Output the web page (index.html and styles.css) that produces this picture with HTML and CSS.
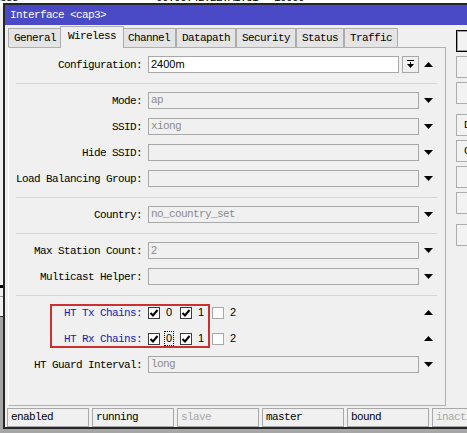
FILE: index.html
```html
<!DOCTYPE html>
<html lang="en">
<head>
  <meta charset="UTF-8" />
  <title>Interface &lt;cap3&gt;</title>
  <link rel="stylesheet" href="styles.css">
</head>
<body>
  <div class="desktop">
    <!-- list window lying behind the dialog -->
    <div class="back-window">
      <div class="back-row">
        <span class="back-name">Wireless</span>
        <span class="back-mac">00:0C:42:2E:A1:31</span>
        <span class="back-rate">10000</span>
      </div>
      <span class="back-mark"></span>
      <span class="back-line"></span>
    </div>

    <div class="window">
      <div class="titlebar">Interface &lt;cap3&gt;</div>

      <div class="win-body">
        <div class="main">
          <div class="tabs">
            <div class="tab">General</div>
            <div class="tab active">Wireless</div>
            <div class="tab">Channel</div>
            <div class="tab">Datapath</div>
            <div class="tab">Security</div>
            <div class="tab">Status</div>
            <div class="tab">Traffic</div>
          </div>

          <div class="panel">
            <div class="row">
              <label class="label">Configuration:</label>
              <div class="combo">
                <div class="input edit">2400m</div>
                <span class="drop-btn">
                  <svg width="8" height="9" viewBox="0 0 8 9">
                    <rect x="0" y="0" width="7" height="1" />
                    <rect x="3" y="2" width="1" height="3" />
                    <polygon points="0,4 7,4 3.5,8" />
                  </svg>
                </span>
              </div>
              <span class="arrow up"></span>
            </div>

            <div class="sep"></div>

            <div class="row">
              <label class="label">Mode:</label>
              <div class="input off">ap</div>
              <span class="arrow down"></span>
            </div>
            <div class="row">
              <label class="label">SSID:</label>
              <div class="input off">xiong</div>
              <span class="arrow down"></span>
            </div>
            <div class="row">
              <label class="label">Hide SSID:</label>
              <div class="input off"></div>
              <span class="arrow down"></span>
            </div>
            <div class="row">
              <label class="label">Load Balancing Group:</label>
              <div class="input off"></div>
              <span class="arrow down"></span>
            </div>

            <div class="sep"></div>

            <div class="row">
              <label class="label">Country:</label>
              <div class="input off">no_country_set</div>
              <span class="arrow down"></span>
            </div>

            <div class="sep"></div>

            <div class="row">
              <label class="label">Max Station Count:</label>
              <div class="input off sans">2</div>
              <span class="arrow down"></span>
            </div>
            <div class="row">
              <label class="label">Multicast Helper:</label>
              <div class="input off"></div>
              <span class="arrow down"></span>
            </div>

            <div class="sep"></div>

            <div class="chains">
              <div class="row">
                <label class="label blue">HT Tx Chains:</label>
                <div class="checks">
                  <span class="cb"><svg width="10" height="10" viewBox="0 0 10 10"><polyline points="1.5,5 4,7.5 8.5,2" /></svg></span><span class="num">0</span>
                  <span class="cb"><svg width="10" height="10" viewBox="0 0 10 10"><polyline points="1.5,5 4,7.5 8.5,2" /></svg></span><span class="num">1</span>
                  <span class="cb off"></span><span class="num">2</span>
                </div>
                <span class="arrow up"></span>
              </div>
              <div class="row">
                <label class="label blue">HT Rx Chains:</label>
                <div class="checks">
                  <span class="cb"><svg width="10" height="10" viewBox="0 0 10 10"><polyline points="1.5,5 4,7.5 8.5,2" /></svg></span><span class="num focus">0</span>
                  <span class="cb"><svg width="10" height="10" viewBox="0 0 10 10"><polyline points="1.5,5 4,7.5 8.5,2" /></svg></span><span class="num">1</span>
                  <span class="cb off"></span><span class="num">2</span>
                </div>
                <span class="arrow up"></span>
              </div>
              <div class="mark-box"></div>
            </div>

            <div class="row">
              <label class="label">HT Guard Interval:</label>
              <div class="input off">long</div>
              <span class="arrow down"></span>
            </div>
          </div>
        </div>

        <div class="actions">
          <button class="default">OK</button>
          <button>Cancel</button>
          <button>Apply</button>
          <button class="group">Disable</button>
          <button>Comment</button>
          <button>Copy</button>
          <button>Remove</button>
          <button class="group">Torch</button>
        </div>
      </div>

      <div class="statusbar">
        <div class="cell">enabled</div>
        <div class="cell">running</div>
        <div class="cell dim">slave</div>
        <div class="cell">master</div>
        <div class="cell">bound</div>
        <div class="cell dim">inactive</div>
      </div>
    </div>
  </div>
</body>
</html>
```

FILE: styles.css
```css
:root {
  --face: #f0f0f0;
  --edge: #a8a8a8;
  --frame: #262626;
  --title: #4a4ac6;
  --muted: #8c8c8c;
  --chain-blue: #1a1ab8;
}

* {
  box-sizing: border-box;
}

body {
  margin: 0;
  width: 467px;
  height: 433px;
  overflow: hidden;
  background: #a6a6a6;
  font-family: 'Liberation Mono', 'DejaVu Sans Mono', monospace;
  font-size: 11px;
  letter-spacing: -0.6px;
  color: #000;
}

.desktop {
  position: relative;
  width: 467px;
  height: 433px;
  overflow: hidden;
}

/* window behind the dialog */
.back-window {
  position: absolute;
  left: -40px;
  top: -10px;
  width: 620px;
  height: 327px;
  background: var(--face);
  border-bottom: 1px solid #333;
}

.back-row {
  display: flex;
  height: 17px;
  line-height: 17px;
  padding-left: 10px;
  background: #fff;
  white-space: nowrap;
}

.back-mac {
  margin-left: 138px;
}

.back-rate {
  margin-left: 16px;
}

.back-mark {
  position: absolute;
  left: 40px;
  top: 295px;
  width: 3px;
  height: 3px;
  background: #000;
}

.back-line {
  position: absolute;
  left: 40px;
  top: 306px;
  width: 4px;
  height: 1px;
  background: #999;
}

/* dialog */
.window {
  position: absolute;
  left: 3px;
  top: 3px;
  width: 600px;
  background: var(--face);
  border-top: 2px solid var(--frame);
  border-left: 2px solid var(--frame);
  border-bottom: 2px solid var(--frame);
}

.titlebar {
  height: 20px;
  line-height: 20px;
  padding-left: 5px;
  background: var(--title);
  color: #fff;
}

.win-body {
  display: flex;
  gap: 10px;
  padding-left: 3px;
}

.main {
  width: 438px;
  flex: none;
}

.tabs {
  display: flex;
  align-items: flex-end;
  height: 22px;
}

.tab {
  height: 19px;
  line-height: 18px;
  padding: 0 5px;
  border: 1px solid #acacac;
  border-bottom: none;
  background: #e4e4e4;
  white-space: nowrap;
}

.tab.active {
  position: relative;
  z-index: 1;
  height: 22px;
  line-height: 19px;
  margin: 0 -2px -1px;
  padding: 0 7px;
  background: var(--face);
}

.panel {
  height: 359px;
  padding: 8px 8px 0 7px;
  border: 1px solid #b0b0b0;
  border-left-color: #fff;
}

.row {
  display: grid;
  grid-template-columns: 132px 271px 18px;
  align-items: center;
  height: 17px;
}

.row + .row,
.chains + .row {
  margin-top: 9px;
}

.label {
  padding-right: 6px;
  text-align: right;
  white-space: nowrap;
}

.label.blue {
  color: var(--chain-blue);
}

.sep {
  height: 1px;
  margin: 10px 0 8px;
  background: #d6d6d6;
}

.input {
  height: 17px;
  line-height: 15px;
  padding-left: 2px;
  border: 1px solid var(--edge);
  white-space: nowrap;
  overflow: hidden;
}

.input.off {
  color: var(--muted);
}

.input.edit {
  background: #fff;
  font-family: 'Liberation Sans', Arial, sans-serif;
  letter-spacing: 0;
}

.input.sans {
  font-family: 'Liberation Sans', Arial, sans-serif;
  letter-spacing: 0;
}

.combo {
  display: flex;
  gap: 3px;
}

.combo .input {
  flex: 1;
}

.drop-btn {
  display: flex;
  align-items: center;
  justify-content: center;
  width: 17px;
  height: 17px;
  border: 1px solid var(--edge);
  background: var(--face);
}

.arrow {
  justify-self: start;
  width: 9px;
  height: 5px;
  margin-left: 5px;
  background: #000;
}

.arrow.down {
  clip-path: polygon(0 0, 100% 0, 50% 100%);
}

.arrow.up {
  clip-path: polygon(50% 0, 100% 100%, 0 100%);
}

/* HT chain checkboxes */
.chains {
  position: relative;
}

.checks {
  display: flex;
  align-items: center;
}

.cb {
  display: flex;
  align-items: center;
  justify-content: center;
  width: 12px;
  height: 12px;
  border: 1px solid #3c3c3c;
  background: #fff;
}

.cb.off {
  border-color: #a8a8a8;
}

.cb polyline {
  fill: none;
  stroke: #000;
  stroke-width: 2;
}

.num {
  width: 6px;
  height: 11px;
  margin: 0 8px 0 6px;
  line-height: 11px;
  font-family: 'Liberation Sans', Arial, sans-serif;
  letter-spacing: 0;
}

.num.focus {
  outline: 1px dotted #000;
  outline-offset: 1px;
}

.mark-box {
  position: absolute;
  left: 34px;
  top: 0;
  width: 160px;
  height: 44px;
  border: 2px solid #cc3030;
  pointer-events: none;
}

/* side buttons */
.actions {
  display: flex;
  flex-direction: column;
  width: 58px;
  flex: none;
  padding-top: 5px;
}

.actions button {
  height: 22px;
  margin-top: 4px;
  padding: 0;
  border: 1px solid #adadad;
  background: #f2f2f2;
  font: inherit;
  letter-spacing: inherit;
  color: #000;
  text-align: center;
  white-space: nowrap;
}

.actions button:first-child {
  margin-top: 0;
}

.actions button.default {
  border-color: #000;
  box-shadow: inset 0 0 0 1px #a0a0a0;
}

.actions button.group {
  margin-top: 10px;
}

/* status bar */
.statusbar {
  display: flex;
  gap: 3px;
  margin-top: 2px;
  padding-left: 2px;
}

.cell {
  flex: none;
  width: 82px;
  height: 19px;
  line-height: 17px;
  padding-left: 3px;
  border: 1px solid var(--edge);
  white-space: nowrap;
  overflow: hidden;
}

.cell.dim {
  color: #a8a8a8;
}
```
